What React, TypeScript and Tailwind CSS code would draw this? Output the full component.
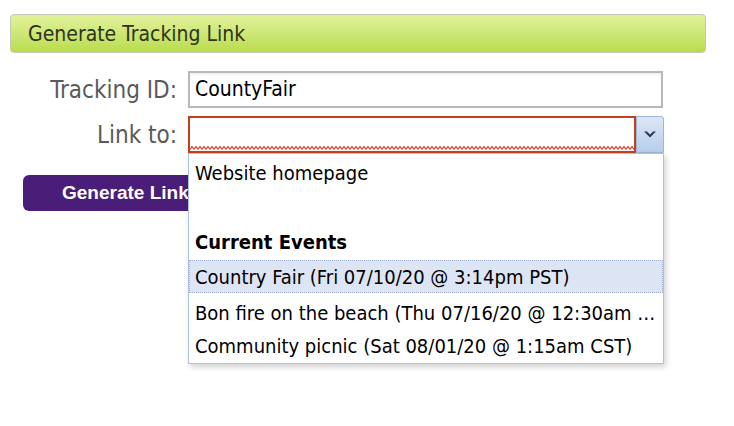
const tahoma = "font-['DejaVu_Sans_Condensed','DejaVu_Sans',sans-serif]";

const events = [
  "Country Fair (Fri 07/10/20 @ 3:14pm PST)",
  "Bon fire on the beach (Thu 07/16/20 @ 12:30am PST)",
  "Community picnic (Sat 08/01/20 @ 1:15am CST)",
];

function Zigzag() {
  return (
    <svg className="absolute bottom-[1px] left-0 h-[4px] w-full" preserveAspectRatio="none">
      <defs>
        <pattern id="zz" width="4" height="4" patternUnits="userSpaceOnUse">
          <path d="M0 3.5 L2 0.5 L4 3.5" fill="none" stroke="#e4442a" strokeWidth="1.3" />
        </pattern>
      </defs>
      <rect width="100%" height="4" fill="url(#zz)" />
    </svg>
  );
}

export default function App() {
  return (
    <div className="h-[426px] w-[734px] overflow-hidden bg-white pt-[14px]">
      <div className="mx-[10px] w-[696px] rounded-[4px] border border-[#c4c9b4] bg-gradient-to-b from-[#e2f29a] to-[#b9dc4c] px-[17px] pt-[7px] pb-[5px]">
        <span className={`${tahoma} text-[21px] leading-[24px] text-[#2e3320]`}>Generate Tracking Link</span>
      </div>

      <div className="relative mt-[18px]">
        <div className="flex items-center">
          <div className={`${tahoma} w-[178px] pr-[1px] text-right text-[24px] leading-[28px] text-[#5a5a5a]`}>Tracking ID:</div>
          <div className="ml-[10px] flex h-[37px] w-[475px] items-center border-2 border-[#b8b8c0] bg-white px-[5px] shadow-[inset_0_2px_2px_rgba(0,0,0,0.06)]">
            <span className={`${tahoma} text-[21px] text-black`}>CountyFair</span>
          </div>
        </div>

        <div className="mt-[8px] flex items-center">
          <div className={`${tahoma} w-[178px] pr-[1px] text-right text-[24px] leading-[28px] text-[#5a5a5a]`}>Link to:</div>
          <div className="ml-[10px] flex h-[37px] w-[476px]">
            <div className="relative flex-1 border-2 border-[#c2411c] bg-white">
              <Zigzag />
            </div>
            <div className="flex w-[28px] items-center justify-center rounded-tr-[3px] border border-[#9fb6d6] bg-gradient-to-b from-[#dbe7f6] to-[#b7cde9]">
              <svg width="14" height="10" viewBox="0 0 14 10">
                <path d="M1 1.5 L4 1.5 L7 4.5 L10 1.5 L13 1.5 L7 7.5 Z" fill="#2c3e5e" />
              </svg>
            </div>
          </div>
        </div>

        <div className="mt-[22px] ml-[23px] flex h-[36px] w-[200px] items-center rounded-[6px] bg-[#4a1e78] pl-[39px]">
          <span className="font-['Liberation_Sans',Arial,sans-serif] text-[19px] font-bold text-white">Generate Link</span>
        </div>

        <div className={`${tahoma} absolute left-[188px] top-[82px] w-[476px] border border-[#a9c3e6] bg-white text-[20px] text-black shadow-[2px_3px_6px_rgba(0,0,0,0.18)]`}>
          <div className="flex h-[38px] items-center px-[6px]">Website homepage</div>
          <div className="h-[32px]" />
          <div className="flex h-[36px] items-center px-[6px] font-bold">Current Events</div>
          <div className="flex h-[33px] items-center border border-dotted border-[#9fb2d4] bg-[#dde5f4] px-[5px]">{events[0]}</div>
          <div className="flex h-[36px] items-center overflow-hidden px-[6px] pt-[3px]">
            <span className="truncate">{events[1]}</span>
          </div>
          <div className="flex h-[34px] items-center px-[6px]">{events[2]}</div>
        </div>
      </div>
    </div>
  );
}
